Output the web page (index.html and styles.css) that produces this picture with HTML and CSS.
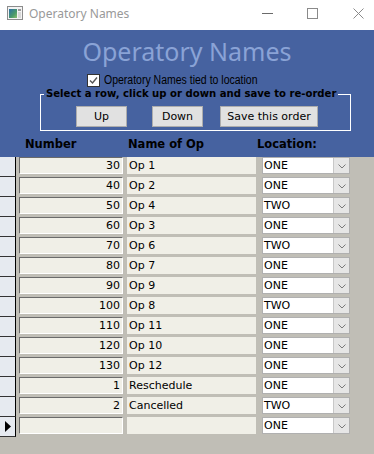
FILE: index.html
```html
<!DOCTYPE html>
<html lang="en">
<head>
    <meta charset="UTF-8">
    <title>Operatory Names</title>
    <link rel="stylesheet" href="styles.css">
</head>
<body>
    <div class="titlebar">
        <svg class="app-icon" width="16" height="14" viewBox="0 0 16 14">
            <defs>
                <linearGradient id="g" x1="0" y1="0" x2="1" y2="1">
                    <stop offset="0" stop-color="#2d6fa8"/>
                    <stop offset="0.6" stop-color="#4a9a6a"/>
                    <stop offset="1" stop-color="#8cc070"/>
                </linearGradient>
            </defs>
            <rect x="0.5" y="0.5" width="15" height="13" fill="#f4f4f4" stroke="#8c8c8c"/>
            <rect x="2" y="3" width="8" height="9" fill="url(#g)"/>
            <rect x="11" y="3" width="3" height="2" fill="#9a9a9a"/>
            <rect x="11" y="6" width="3" height="6" fill="#d8d8d8"/>
        </svg>
        <span class="title">Operatory Names</span>
        <div class="controls">
            <svg class="ctl-min" width="11" height="11" viewBox="0 0 11 11"><path d="M0 5.5h11" stroke="#6a6a6a" stroke-width="1"/></svg>
            <svg class="ctl-max" width="11" height="11" viewBox="0 0 11 11"><rect x="0.5" y="0.5" width="10" height="10" fill="none" stroke="#8a8a8a"/></svg>
            <svg class="ctl-close" width="11" height="11" viewBox="0 0 11 11"><path d="M0.5 0.5l10 10M10.5 0.5l-10 10" stroke="#8a8a8a" stroke-width="1"/></svg>
        </div>
    </div>

    <div class="header">
        <h1>Operatory Names</h1>
        <div class="tied">
            <svg class="check" width="13" height="13" viewBox="0 0 13 13">
                <rect x="0.5" y="0.5" width="12" height="12" fill="#fff" stroke="#333"/>
                <path d="M3 6.5l2.5 2.5 4.5-5.5" fill="none" stroke="#555" stroke-width="1.4"/>
            </svg>
            <span class="tied-label">Operatory Names tied to location</span>
        </div>
        <fieldset class="reorder">
            <legend>Select a row, click up or down and save to re-order</legend>
            <div class="btn-row">
                <button type="button" class="btn btn-up">Up</button>
                <button type="button" class="btn btn-down">Down</button>
                <button type="button" class="btn btn-save">Save this order</button>
            </div>
        </fieldset>
        <div class="col-heads">
            <span>Number</span>
            <span>Name of Op</span>
            <span>Location:</span>
        </div>
    </div>

    <div class="detail">
        <div class="row"><div class="sel"></div><div class="num">30</div><div class="name">Op 1</div><div class="combo"><span class="val">ONE</span><span class="arrow"><svg width="8" height="5" viewBox="0 0 8 5"><path d="M0.5 0.5l3.5 3.5 3.5-3.5" fill="none" stroke="#7a7a7a"/></svg></span></div></div>
        <div class="row"><div class="sel"></div><div class="num">40</div><div class="name">Op 2</div><div class="combo"><span class="val">ONE</span><span class="arrow"><svg width="8" height="5" viewBox="0 0 8 5"><path d="M0.5 0.5l3.5 3.5 3.5-3.5" fill="none" stroke="#7a7a7a"/></svg></span></div></div>
        <div class="row"><div class="sel"></div><div class="num">50</div><div class="name">Op 4</div><div class="combo"><span class="val">TWO</span><span class="arrow"><svg width="8" height="5" viewBox="0 0 8 5"><path d="M0.5 0.5l3.5 3.5 3.5-3.5" fill="none" stroke="#7a7a7a"/></svg></span></div></div>
        <div class="row"><div class="sel"></div><div class="num">60</div><div class="name">Op 3</div><div class="combo"><span class="val">ONE</span><span class="arrow"><svg width="8" height="5" viewBox="0 0 8 5"><path d="M0.5 0.5l3.5 3.5 3.5-3.5" fill="none" stroke="#7a7a7a"/></svg></span></div></div>
        <div class="row"><div class="sel"></div><div class="num">70</div><div class="name">Op 6</div><div class="combo"><span class="val">TWO</span><span class="arrow"><svg width="8" height="5" viewBox="0 0 8 5"><path d="M0.5 0.5l3.5 3.5 3.5-3.5" fill="none" stroke="#7a7a7a"/></svg></span></div></div>
        <div class="row"><div class="sel"></div><div class="num">80</div><div class="name">Op 7</div><div class="combo"><span class="val">ONE</span><span class="arrow"><svg width="8" height="5" viewBox="0 0 8 5"><path d="M0.5 0.5l3.5 3.5 3.5-3.5" fill="none" stroke="#7a7a7a"/></svg></span></div></div>
        <div class="row"><div class="sel"></div><div class="num">90</div><div class="name">Op 9</div><div class="combo"><span class="val">ONE</span><span class="arrow"><svg width="8" height="5" viewBox="0 0 8 5"><path d="M0.5 0.5l3.5 3.5 3.5-3.5" fill="none" stroke="#7a7a7a"/></svg></span></div></div>
        <div class="row"><div class="sel"></div><div class="num">100</div><div class="name">Op 8</div><div class="combo"><span class="val">TWO</span><span class="arrow"><svg width="8" height="5" viewBox="0 0 8 5"><path d="M0.5 0.5l3.5 3.5 3.5-3.5" fill="none" stroke="#7a7a7a"/></svg></span></div></div>
        <div class="row"><div class="sel"></div><div class="num">110</div><div class="name">Op 11</div><div class="combo"><span class="val">ONE</span><span class="arrow"><svg width="8" height="5" viewBox="0 0 8 5"><path d="M0.5 0.5l3.5 3.5 3.5-3.5" fill="none" stroke="#7a7a7a"/></svg></span></div></div>
        <div class="row"><div class="sel"></div><div class="num">120</div><div class="name">Op 10</div><div class="combo"><span class="val">ONE</span><span class="arrow"><svg width="8" height="5" viewBox="0 0 8 5"><path d="M0.5 0.5l3.5 3.5 3.5-3.5" fill="none" stroke="#7a7a7a"/></svg></span></div></div>
        <div class="row"><div class="sel"></div><div class="num">130</div><div class="name">Op 12</div><div class="combo"><span class="val">ONE</span><span class="arrow"><svg width="8" height="5" viewBox="0 0 8 5"><path d="M0.5 0.5l3.5 3.5 3.5-3.5" fill="none" stroke="#7a7a7a"/></svg></span></div></div>
        <div class="row"><div class="sel"></div><div class="num">1</div><div class="name">Reschedule</div><div class="combo"><span class="val">ONE</span><span class="arrow"><svg width="8" height="5" viewBox="0 0 8 5"><path d="M0.5 0.5l3.5 3.5 3.5-3.5" fill="none" stroke="#7a7a7a"/></svg></span></div></div>
        <div class="row"><div class="sel"></div><div class="num">2</div><div class="name">Cancelled</div><div class="combo"><span class="val">TWO</span><span class="arrow"><svg width="8" height="5" viewBox="0 0 8 5"><path d="M0.5 0.5l3.5 3.5 3.5-3.5" fill="none" stroke="#7a7a7a"/></svg></span></div></div>
        <div class="row"><div class="sel current"><svg width="6" height="11" viewBox="0 0 6 11"><path d="M0 0l6 5.5-6 5.5z" fill="#000"/></svg></div><div class="num"></div><div class="name"></div><div class="combo"><span class="val">ONE</span><span class="arrow"><svg width="8" height="5" viewBox="0 0 8 5"><path d="M0.5 0.5l3.5 3.5 3.5-3.5" fill="none" stroke="#7a7a7a"/></svg></span></div></div>
    </div>
</body>
</html>
```

FILE: styles.css
```css
body {
    margin: 0;
    width: 374px;
    height: 454px;
    overflow: hidden;
    background-color: #c0beb6;
    font-family: "DejaVu Sans", sans-serif;
}
.titlebar {
    height: 30px;
    background-color: #fff;
    display: flex;
    align-items: center;
}
.app-icon {
    margin-left: 7px;
    margin-top: -4px;
}
.title {
    margin-left: 6px;
    margin-top: -3px;
    font-family: "Noto Sans", sans-serif;
    font-size: 12px;
    color: #999;
}
.controls {
    margin-left: auto;
    display: flex;
    align-items: center;
    margin-top: -3px;
}
.ctl-min {
    margin-right: 34px;
}
.ctl-max {
    margin-right: 35px;
}
.ctl-close {
    margin-right: 10px;
}
.header {
    height: 127px;
    box-sizing: border-box;
    background-color: #4662a0;
    padding-top: 6px;
}
h1 {
    margin: 0;
    font-family: "Noto Sans", sans-serif;
    font-weight: normal;
    font-size: 25px;
    line-height: 30px;
    color: #8aa3d6;
    text-align: center;
}
.tied {
    display: flex;
    align-items: center;
    height: 14px;
    margin-top: 7px;
    padding-left: 87px;
    font-family: "Liberation Sans", sans-serif;
    font-size: 12px;
    color: #000;
}
.check {
    margin-right: 4px;
    flex: none;
}
.tied-label {
    white-space: nowrap;
    transform: scaleX(0.875);
    transform-origin: left center;
}
.reorder {
    margin: 0 0 0 40px;
    width: 311px;
    box-sizing: border-box;
    border: 1px solid #fff;
    padding: 0 0 3px 0;
}
.reorder legend {
    margin-left: 3px;
    padding: 0 2px;
    font-weight: bold;
    font-size: 10.1px;
    line-height: 14px;
    color: #000;
}
.btn-row {
    display: flex;
    margin-top: 5px;
}
.btn {
    height: 21px;
    padding: 0;
    background-color: #e1e1e1;
    border: 1px solid #adadad;
    font-family: "DejaVu Sans", sans-serif;
    font-size: 11px;
    color: #000;
}
.btn-up {
    margin-left: 35px;
    width: 51px;
}
.btn-down {
    margin-left: 25px;
    width: 51px;
}
.btn-save {
    margin-left: 17px;
    width: 98px;
}
.col-heads {
    display: grid;
    grid-template-columns: 103px 129px auto;
    margin-top: 6px;
    padding-left: 25px;
    font-weight: bold;
    font-size: 11.5px;
    line-height: 14px;
    color: #000;
}
.row {
    display: flex;
    height: 20px;
    font-size: 11px;
    line-height: 15px;
    color: #000;
}
.sel {
    width: 15px;
    height: 19px;
    background-color: #e6eaf0;
    border-right: 1px solid #000;
    border-bottom: 1px solid #333;
    display: flex;
    align-items: center;
    justify-content: center;
}
.num {
    margin-left: 3px;
    width: 104px;
    height: 17px;
    box-sizing: border-box;
    background-color: #f0efe7;
    border-top: 1px solid #6b6b6b;
    border-left: 1px solid #6b6b6b;
    border-bottom: 1px solid #fff;
    border-right: 1px solid #fff;
    text-align: right;
    padding-right: 2px;
}
.name {
    margin-left: 4px;
    width: 129px;
    height: 17px;
    box-sizing: border-box;
    background-color: #f0efe7;
    padding: 1px 0 0 2px;
}
.combo {
    margin-left: 6px;
    width: 88px;
    height: 17px;
    box-sizing: border-box;
    display: flex;
    background-color: #fff;
    border: 1px solid #b0b0b0;
}
.combo .val {
    flex: 1;
    padding-left: 1px;
}
.combo .arrow {
    width: 16px;
    background-color: #e6e6e6;
    border-left: 1px solid #c8c8c8;
    display: flex;
    align-items: center;
    justify-content: center;
    padding-top: 2px;
    box-sizing: border-box;
}
```
